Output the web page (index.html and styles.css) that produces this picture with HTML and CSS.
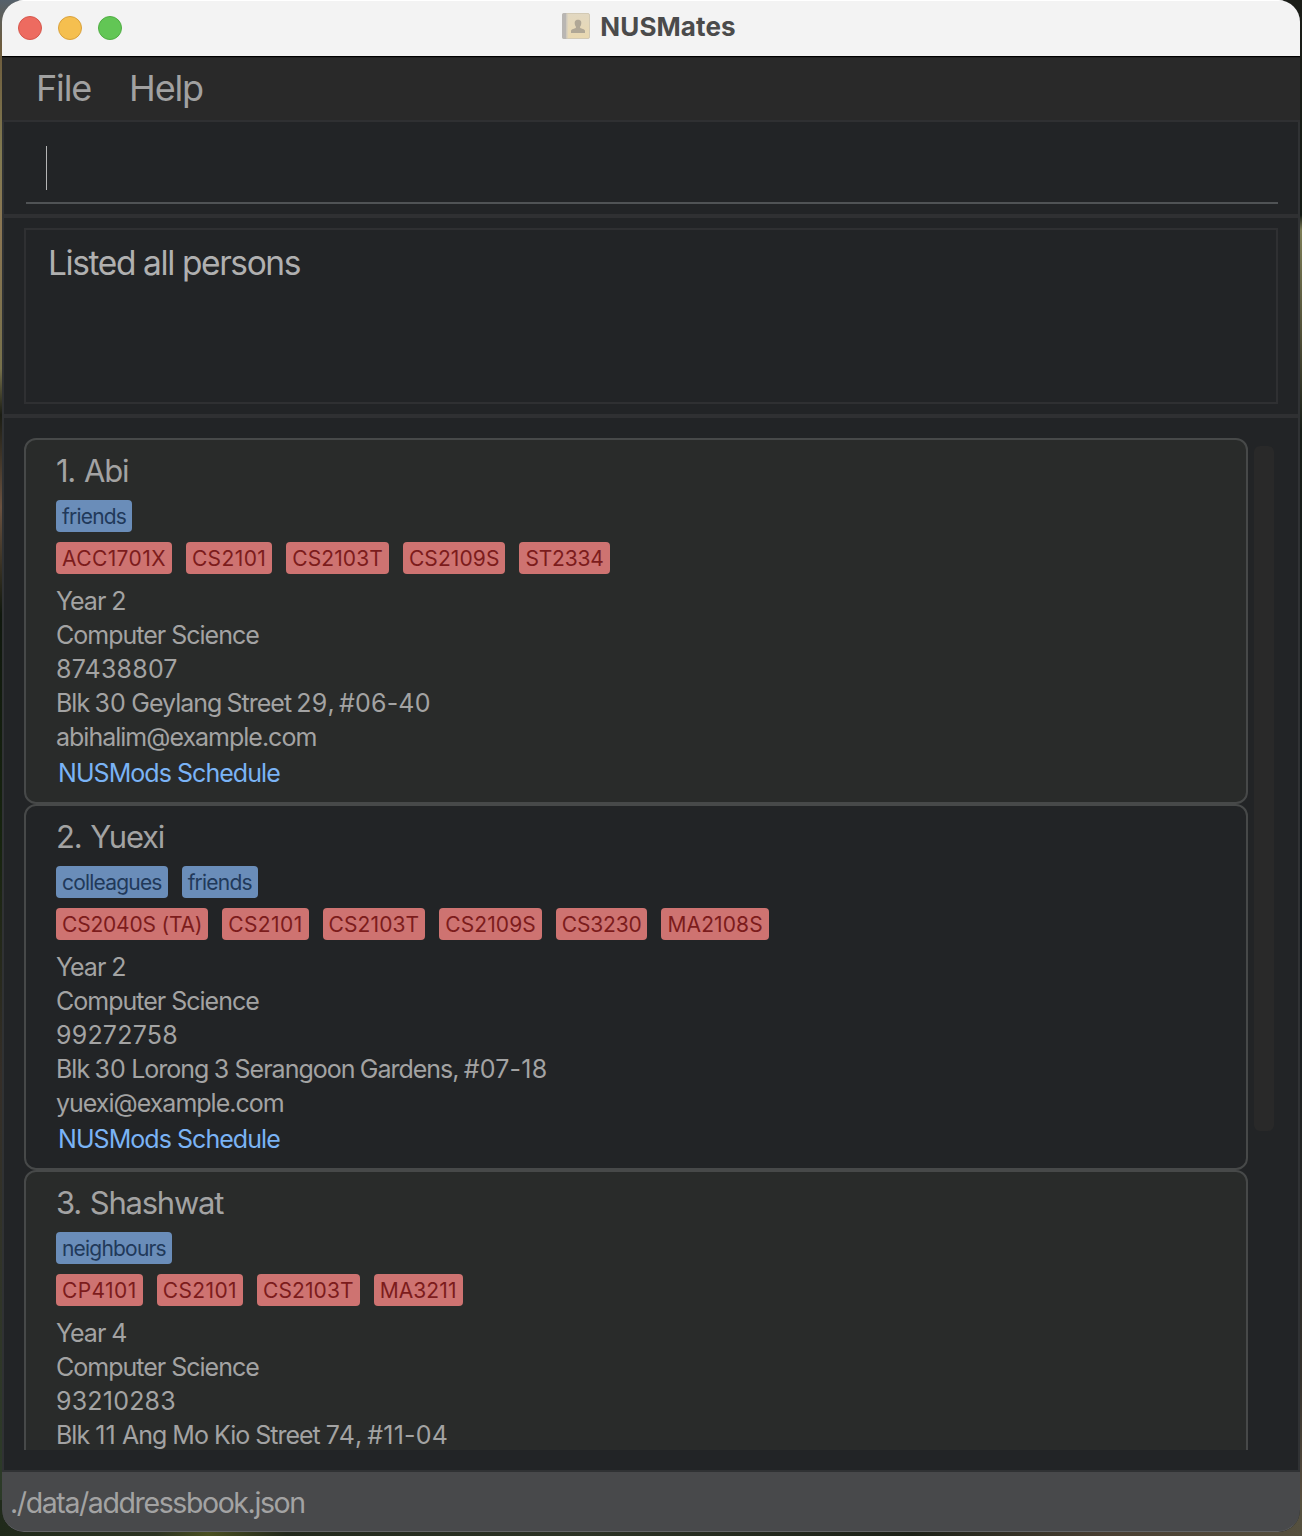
FILE: index.html
```html
<!DOCTYPE html>
<html lang="en">
<head>
<meta charset="utf-8">
<title>NUSMates</title>
<link rel="stylesheet" href="styles.css">
</head>
<body>
<div class="window">
  <header class="titlebar">
    <div class="lights"><i class="light red"></i><i class="light amber"></i><i class="light green"></i></div>
    <div class="title">
      <svg class="book" width="30" height="28" viewBox="0 0 30 28">
        <defs><linearGradient id="cover" x1="0" y1="0" x2="0" y2="1"><stop offset="0" stop-color="#e2d8c2"/><stop offset="1" stop-color="#e9d8b0"/></linearGradient></defs>
        <rect x="1.5" y="1.5" width="27" height="25" rx="1.5" fill="url(#cover)" stroke="#d3cab5"/>
        <path d="M3 1h2.500v26H3a2 2 0 0 1-2-2V3a2 2 0 0 1 2-2z" fill="#b9b6b3"/>
        <path d="M6 1.500v25" stroke="#cfcac0"/>
        <path d="M10 21v-2c0-1.200 1-1.700 2.200-2.100 1.800-.6 2.800-.8 2.800-1.700 0-.6-.7-1.100-1-2.200-.4-1.600-.4-2.700-.1-3.500.4-1.300 1.600-1.800 3.100-1.800s2.700.5 3.100 1.800c.3.800.3 1.900-.1 3.500-.3 1.100-1 1.600-1 2.200 0 .9 1 1.100 2.800 1.700 1.200.4 2.200.9 2.200 2.100v2z" fill="#b0a796"/>
      </svg>
      <span>NUSMates</span>
    </div>
  </header>
  <nav class="menubar"><span class="file">File</span><span class="help">Help</span></nav>
  <main class="content">
    <section class="command"><div class="field"><i class="caret"></i></div></section>
    <section class="result"><div class="display">Listed all persons</div></section>
    <section class="persons">
      <div class="list">
        <article class="card odd">
          <h2>1. Abi</h2>
          <div class="tags"><span class="tag">friends</span></div>
          <div class="tags"><span class="mod wide">ACC1701X</span><span class="mod wide">CS2101</span><span class="mod">CS2103T</span><span class="mod">CS2109S</span><span class="mod tight">ST2334</span></div>
          <div class="details"><p>Year 2</p><p>Computer Science</p><p class="num">87438807</p><p class="address">Blk <span class="num">30</span> Geylang Street <span class="num">29</span>, <span class="num">#06-40</span></p><p>abihalim@example.com</p></div>
          <a class="link">NUSMods Schedule</a>
        </article>
        <article class="card">
          <h2>2. Yuexi</h2>
          <div class="tags"><span class="tag">colleagues</span><span class="tag">friends</span></div>
          <div class="tags"><span class="mod tight">CS2040S (TA)</span><span class="mod wide">CS2101</span><span class="mod">CS2103T</span><span class="mod">CS2109S</span><span class="mod tight">CS3230</span><span class="mod">MA2108S</span></div>
          <div class="details"><p>Year 2</p><p>Computer Science</p><p class="num">99272758</p><p class="address">Blk <span class="num">30</span> Lorong <span class="num">3</span> Serangoon Gardens, <span class="num">#07-18</span></p><p>yuexi@example.com</p></div>
          <a class="link">NUSMods Schedule</a>
        </article>
        <article class="card odd">
          <h2>3. Shashwat</h2>
          <div class="tags"><span class="tag">neighbours</span></div>
          <div class="tags"><span class="mod wide">CP4101</span><span class="mod wide">CS2101</span><span class="mod">CS2103T</span><span class="mod">MA3211</span></div>
          <div class="details"><p>Year 4</p><p>Computer Science</p><p class="num">93210283</p><p>Blk <span class="num">11</span> Ang Mo Kio Street <span class="num">74</span>, <span class="num">#11-04</span></p></div>
        </article>
      </div>
      <div class="scrollbar"></div>
    </section>
  </main>
  <footer class="status">./data/addressbook.json</footer>
</div>
</body>
</html>
```
FILE: styles.css
```css
* { box-sizing: border-box; }
body {
  margin: 0;
  height: 1536px;
  padding: 0 2px 4px;
  overflow: hidden;
  font-family: Inter, "Liberation Sans", sans-serif;
  color: #a3a3a3;
  background:
    linear-gradient(90deg, #202a1b, #2c3422 12%, #4a5020 16%, #22291c 22%, #2c3325 45%, #1c2117 70%, #493f32 85%, #55503f) 0 1500px / 100% 36px no-repeat,
    linear-gradient(#55616b, #6d5b3c 3%, #817a51 10%, #8b7653 15%, #77714b 24%, #1b1d14 27%, #6b5240 33%, #10180e 40%, #17240f 55%, #352e28 70%, #2b3c28) 0 0 / 50% 100% no-repeat,
    linear-gradient(#1b1d18, #141a14 14%, #7c7d56 15%, #4d4c35 22%, #171d18 28%, #10171b 60%, #33302b 90%, #625644) 100% 0 / 50% 100% no-repeat;
}
.window {
  height: 1532px;
  display: flex;
  flex-direction: column;
  border-radius: 22px;
  overflow: hidden;
  background: #222426;
}
.titlebar {
  flex: none;
  height: 57px;
  display: grid;
  grid-template-columns: 1fr auto 1fr;
  background: #f3f3f3;
  border-top: 1px solid #fff;
  border-bottom: 1px solid #000;
}
.lights { display: flex; gap: 16px; padding: 15px 0 0 16px; }
.light { width: 24px; height: 24px; border-radius: 50%; border: 1px solid; }
.red { background: #ed6b60; border-color: #d6574c; }
.amber { background: #f5bf4f; border-color: #d9a13c; }
.green { background: #62c655; border-color: #50ad43; }
.title {
  display: flex;
  gap: 9px;
  height: 50px;
  padding-right: 5px;
  align-items: center;
  font-size: 26px;
  font-weight: 700;
  letter-spacing: 0.1px;
  color: #4b4b4b;
}
.menubar {
  flex: none;
  height: 65px;
  display: flex;
  gap: 38px;
  padding-left: 34px;
  line-height: 61px;
  font-size: 36px;
  letter-spacing: -1.15px;
  background: #292929;
  border-top: 1px solid #202020;
  border-bottom: 2px solid #2f3032;
  color: #a1a1a1;
}
.content {
  flex: 1;
  min-height: 0;
  display: flex;
  flex-direction: column;
  border: solid #303234;
  border-width: 0 2px;
}
.command { flex: none; height: 96px; padding: 0 20px 0 22px; border-bottom: 4px solid #2f3032; }
.field { height: 82px; padding: 24px 20px; border-bottom: 2px solid #505355; }
.caret { display: block; width: 1px; height: 44px; background: #b5b5b5; }
.result { flex: none; height: 200px; padding: 10px 20px; border-bottom: 4px solid #2f3032; }
.display {
  height: 176px;
  border: 2px solid #2f3032;
  padding: 12px 22px;
  font-size: 33.5px;
  line-height: 42px;
  letter-spacing: -1.4px;
  color: #b0b0b0;
}
.persons { flex: 1; min-height: 0; display: flex; gap: 6px; padding: 20px 0 20px 20px; }
.list { width: 1224px; overflow: hidden; }
.card { height: 366px; border: 2px solid #474949; border-radius: 12px; padding: 14px 30px 0; background: #222426; }
.card.odd { background: #292b2a; }
.card h2 { margin: 0 0 12px; font-weight: 400; font-size: 31px; line-height: 34px; letter-spacing: -1.25px; word-spacing: 1.5px; }
.tags { display: flex; gap: 14px; margin-bottom: 10px; }
.tag, .mod { height: 32px; line-height: 33px; padding: 0 6px; border-radius: 4px; font-size: 21px; white-space: nowrap; }
.tag { background: #6a8db9; color: #21395a; letter-spacing: -0.8px; }
.mod { background: #ce7371; color: #7c1c1c; letter-spacing: 0.1px; }
.mod.wide { letter-spacing: 0.4px; }
.mod.tight { letter-spacing: -0.2px; }
.details p { margin: 0; font-size: 25px; line-height: 34px; letter-spacing: -1px; }
.details .num { letter-spacing: 0.2px; }
.details .address { word-spacing: -0.8px; }
.link { display: block; margin: 2px 0 0 2px; font-size: 25px; line-height: 34px; letter-spacing: -0.95px; color: #7ab3f5; }
.scrollbar { width: 20px; height: 685px; margin-top: 8px; border-radius: 6px; background: #292929; }
.status {
  flex: none;
  height: 62px;
  padding-left: 8px;
  font-size: 28.5px;
  line-height: 61px;
  letter-spacing: -1.4px;
  background: #48494b;
  border-top: 2px solid #303234;
  border-bottom: 1px solid #626466;
  border-radius: 0 0 22px 22px;
}
```
